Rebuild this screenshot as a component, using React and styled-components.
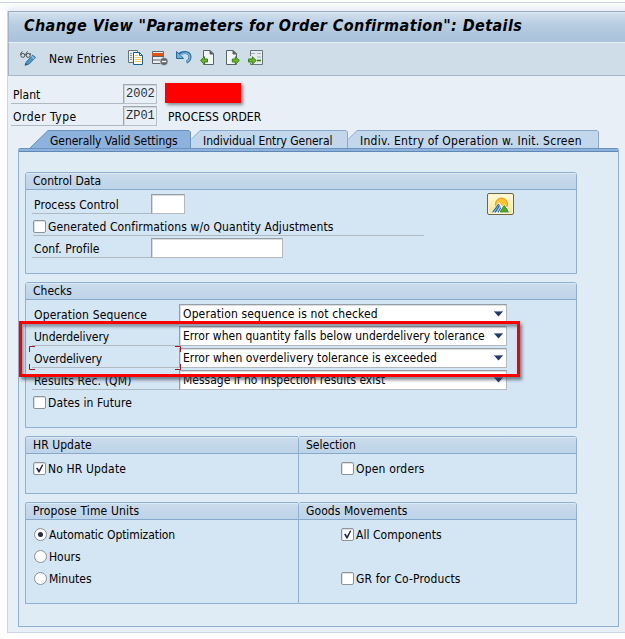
import React from 'react';
import styled, { createGlobalStyle, css } from 'styled-components';

const GlobalStyle = createGlobalStyle`
  * { box-sizing: border-box; }
  body {
    margin: 0;
    background: #fff;
    overflow: hidden;
    font: 12px/16px "DejaVu Sans Condensed", "DejaVu Sans", sans-serif;
    color: #000;
  }
`;

const Page = styled.div`
  width: 625px;
  height: 639px;
  padding-top: 2px;
`;

const TopStrip = styled.div`
  height: 9px;
  border-top: 1px solid #cbd5e2;
  background: linear-gradient(90deg, #fff, rgba(255, 255, 255, 0) 12px), linear-gradient(#fbfcfe, #e9eef6);
`;

const Window = styled.div`
  margin-left: 7px;
  height: 622px;
  border-left: 1px solid #ccd6e6;
  border-bottom: 1px solid #ccd6e6;
  background: #e8eff7;
`;

const TitleBar = styled.h1`
  margin: 0;
  height: 31px;
  padding: 3px 0 0 15px;
  border-top: 1px solid #97a9bd;
  border-left: 1px solid #a3b4c8;
  background: linear-gradient(#d2e0ee, #b6cce1 45%, #a9c2da);
  box-shadow: inset 0 1px #dfe9f2;
  font: italic bold 16px/22px "DejaVu Sans Condensed", "DejaVu Sans", sans-serif;
  letter-spacing: 0.4px;
  white-space: nowrap;
`;

const Toolbar = styled.div`
  display: flex;
  align-items: center;
  height: 34px;
  padding: 0 0 0 11px;
  border-top: 1px solid #e8f0f7;
  border-left: 1px solid #a3b4c8;
  border-bottom: 1px solid #a6b6c8;
  background: #cedde8;

  svg { display: block; flex: none; }
`;

const ToolIcons = styled.div`
  display: flex;
  gap: 8px;
  margin: -2px 0 0 12px;
`;

const Text = styled.span`
  white-space: nowrap;
  letter-spacing: ${({ $track = 0 }) => $track}px;
`;

const ToolText = styled(Text)`
  margin-left: 12px;
`;

const KeyFields = styled.div`
  padding: 8px 0 0 3px;
`;

const KeyRow = styled.div`
  display: flex;
  height: 22px;
`;

const KeyLabel = styled.div`
  width: 112px;
  height: 20px;
  padding: 3px 0 0 2px;
  border-bottom: 1px solid #b0b9c2;
`;

const KeyValue = styled.div`
  width: 34px;
  height: 20px;
  padding: 2px 0 0 2px;
  border: 1px solid #a0a7ae;
  border-right-color: #b9c0c6;
  border-bottom-color: #b9c0c6;
  box-shadow: inset 1px 1px #cfd6dc;
  background: #e8eff6;
  color: #26303c;
  font: 12px/15px "Liberation Mono", monospace;
`;

const Redacted = styled.div`
  width: 76px;
  height: 20px;
  margin: -1px 0 0 8px;
  background: #f00;
  box-shadow: 2px 2px 3px rgba(60, 70, 80, 0.6);
`;

const KeyDescription = styled(Text)`
  margin: 3px 0 0 11px;
`;

const Tabs = styled.div`
  display: flex;
  height: 18px;
  margin: 2px 0 0 22px;
`;

const TabBox = styled.div`
  position: relative;
  width: ${({ $width }) => $width}px;
  height: 18px;
  padding: 3px 0 0 ${({ $indent }) => $indent}px;
`;

const TabShape = styled.svg`
  position: absolute;
  inset: 0;
  overflow: visible;
`;

const TabLabel = styled(Text)`
  position: relative;
`;

const TabPage = styled.div`
  width: 601px;
  height: 479px;
  margin-left: 10px;
  padding: 24px 0 0 6px;
  border: 1px solid #8fb0d2;
  border-top: 0;
  border-radius: 2px 2px 0 0;
  background: linear-gradient(#6c93c0 0 1px, #8fb2dc 1px 3px, #6088b6 3px 4px, transparent 4px), #dfebf5;
`;

const Sections = styled.div`
  width: 552px;
  display: flex;
  flex-direction: column;
  gap: 8px;
`;

const SectionPair = styled.div`
  display: grid;
  grid-template-columns: 273px 279px;
`;

const Group = styled.section`
  position: relative;
  height: ${({ $height }) => $height}px;
  border: 1px solid #8fb0d0;
  ${({ $joined }) => $joined && css`border-right: 0;`}
  border-radius: 3px ${({ $joined }) => ($joined ? 0 : 3)}px 0 0;
  background: #d4e5f3;
`;

const GroupTitle = styled.h2`
  margin: 0;
  height: 17px;
  padding-left: 7px;
  border-bottom: 1px solid #86a9cc;
  border-radius: 2px 2px 0 0;
  background: linear-gradient(#cbdcec, #bdd3e8);
  box-shadow: inset 0 1px #dce8f3;
  font: inherit;
  line-height: 16px;
`;

const GroupBody = styled.div`
  padding: ${({ $top = 4 }) => $top}px 0 0 ${({ $left = 7 }) => $left}px;
`;

const FieldRow = styled.div`
  display: flex;
  height: 22px;
`;

const FieldLabel = styled.div`
  position: relative;
  width: ${({ $width }) => $width}px;
  height: 20px;
  padding: 3px 0 0 2px;
  margin-left: -1px;
  border-bottom: 1px solid #afb9c2;
`;

const Input = styled.div`
  width: ${({ $width }) => $width}px;
  height: 20px;
  border: 1px solid #979ea5;
  border-right-color: #b3b9bf;
  border-bottom-color: #b3b9bf;
  box-shadow: inset 1px 1px #dadde0;
  background: #fff;
`;

const Combo = styled(Input)`
  display: flex;
  justify-content: space-between;
  padding: 1px 3px 0 3px;

  svg { margin-top: 5px; }
`;

const CheckRow = styled.label`
  display: flex;
  width: ${({ $width }) => ($width ? `${$width}px` : 'auto')};
  height: ${({ $height = 22 }) => $height}px;
  border-bottom: ${({ $width }) => ($width ? '1px solid #afb9c2' : '0')};
  margin-bottom: ${({ $width }) => ($width ? 2 : 0)}px;
  padding-top: 4px;
`;

const CheckBox = styled.span`
  display: flex;
  width: 13px;
  height: 13px;
  margin-right: 2px;
  border: 1px solid #8d9398;
  border-radius: 2px;
  background: #fff;
  box-shadow: inset 1px 1px #dfe1e3;
`;

const CheckText = styled(Text)`
  margin-top: -1px;
`;

const Radio = styled.span`
  display: flex;
  align-items: center;
  justify-content: center;
  width: 13px;
  height: 13px;
  margin: 0 2px 0 1px;
  border: 1px solid #8a9096;
  border-radius: 50%;
  background: #fff;
`;

const RadioDot = styled.span`
  width: 5px;
  height: 5px;
  border-radius: 50%;
  background: #262c48;
`;

const OverviewButton = styled.button`
  position: absolute;
  left: 461px;
  top: 20px;
  width: 27px;
  height: 22px;
  padding: 0;
  border: 1px solid #6c6650;
  border-radius: 2px;
  background: linear-gradient(#fffbdc, #f9e48e);
  box-shadow: inset 0 0 0 1px #fff5c4;

  svg { display: block; margin: 1px 0 0 3px; }
`;

const Highlight = styled.div`
  position: absolute;
  left: -7px;
  top: 38px;
  width: 501px;
  height: 56px;
  border: 3px solid #f80000;
  box-shadow: 2px 3px 3px rgba(50, 60, 75, 0.6), inset 2px 3px 3px rgba(50, 60, 75, 0.45);
  pointer-events: none;
`;

const FocusCorners = styled.svg`
  position: absolute;
  left: -3px;
  top: -2px;
`;

const TickMark = () => (
  <svg width="11" height="11" viewBox="0 0 11 11">
    <path d="M2 5 3.8 4.8 5 7 8 1.6 9.4 1.8 5.6 9.4 4.4 9.4Z" fill="#262b48" />
  </svg>
);

const Check = ({ checked, text, track, width, height }) => (
  <CheckRow $width={width} $height={height}>
    <CheckBox>{checked && <TickMark />}</CheckBox>
    <CheckText $track={track}>{text}</CheckText>
  </CheckRow>
);

const RadioOption = ({ checked, text, track }) => (
  <CheckRow>
    <Radio>{checked && <RadioDot />}</Radio>
    <CheckText $track={track}>{text}</CheckText>
  </CheckRow>
);

const Tab = ({ width, indent, slope, start, active, text, track }) => {
  const edge = `L${start + slope} .5 H${width - 2} L${width - 0.5} 2 V18`;
  return (
    <TabBox $width={width} $indent={indent}>
      <TabShape width={width} height="18">
        <path
          d={active ? `M${start} 18 ${edge}Z` : `M0 18 V10 ${edge}Z`}
          fill={active ? '#8eb2de' : '#c2d7eb'}
        />
        <path
          d={`M${start} ${active ? 18 : 9.5} ${edge}`}
          fill="none"
          stroke={active ? '#6b92bd' : '#8aa9c9'}
        />
      </TabShape>
      <TabLabel $track={track}>{text}</TabLabel>
    </TabBox>
  );
};

const ComboField = ({ label, labelTrack, value, track, focused }) => (
  <FieldRow>
    <FieldLabel $width={147}>
      <Text $track={labelTrack}>{label}</Text>
      {focused && (
        <FocusCorners width="153" height="24" fill="none" stroke="#a8141c">
          <path d="M.5 6V.5H6 M146 .5H151.5V6 M.5 18V23.5H6 M146 23.5H151.5V18" />
        </FocusCorners>
      )}
    </FieldLabel>
    <Combo $width={328}>
      <Text $track={track}>{value}</Text>
      <svg width="9" height="6" viewBox="0 0 9 6">
        <path d="M0 .5H9L4.5 5.5Z" fill="#23386a" />
        <path d="M0 .5H9" stroke="#7788a8" />
      </svg>
    </Combo>
  </FieldRow>
);

const DisplayChangeIcon = () => (
  <svg width="17" height="16" viewBox="0 0 17 16" fill="none">
    <g stroke="#4b4f52">
      <circle cx="2.8" cy="4.4" r="2" />
      <circle cx="8.2" cy="4.4" r="2" />
      <path d="M.8 4V2L2.5 .5 M6.2 4V2L7.8 .5 M4.8 4H6.2 M10.2 4V2" />
    </g>
    <path d="M5 14.3 6.3 10.9 12.6 4 15.6 6.5 9 13.1Z" fill="#4b94c4" stroke="#286a98" strokeWidth=".8" />
    <path d="M11.5 5.2 14.4 7.8" stroke="#d7e8f2" />
    <path d="M5 14.3 5.8 12.1 7.4 13.5Z" fill="#344653" />
  </svg>
);

const CopyIcon = () => (
  <svg width="16" height="16" viewBox="0 0 16 16" fill="none">
    <path d="M.5 12.5V.5H9.5V12.5Z" fill="#e6edf2" stroke="#68747c" />
    <path d="M2 3.5H4 M2 5.5H4 M2 7.5H4 M2 9.5H4" stroke="#89949b" />
    <path d="M5.5 2.5H11.5L14.5 5.5V14.5H5.5Z" fill="#fff" stroke="#16638f" />
    <path d="M11.5 2.5V5.5H14.5" stroke="#16638f" />
    <path d="M7 5.5H10 M7 7.5H13 M7 9.5H13 M7 11.5H13" stroke="#f3cb5a" />
  </svg>
);

const DeleteRowIcon = () => (
  <svg width="16" height="16" viewBox="0 0 16 16" fill="none">
    <path d="M.5 1.5H11.5V13.5H.5Z" fill="#e9eff4" stroke="#5e6468" />
    <path d="M0 3H12V6H0Z" fill="#db5316" />
    <path d="M0 6.5H12 M0 10H12" stroke="#5e6468" />
    <circle cx="12" cy="11.5" r="4" fill="#5d5f62" stroke="#e2eaf0" strokeWidth=".6" />
    <path d="M9.8 11.5H14.2" stroke="#fff" strokeWidth="1.6" />
  </svg>
);

const UndoIcon = () => (
  <svg width="16" height="16" viewBox="0 0 16 16" fill="none">
    <path d="M2.5 5.2C6 1.2 13.5 1.5 14 6.5 14.2 9.5 12 11.5 10.5 12" stroke="#246b9d" strokeWidth="3" />
    <path d="M.5 1.5V8.5H7.5L5.7 6.5 3 3.8Z" fill="#6fadd5" stroke="#246b9d" />
    <path d="M3.5 5.5C7 2 12.5 2.3 13.8 6 14.2 9 12.5 10.7 10.8 11.8" stroke="#74b1d7" strokeWidth="1.4" />
  </svg>
);

const PageIcon = ({ shift = 0 }) => (
  <>
    <path d={`M${2.5 + shift} .5H${9 + shift}L${12.5 + shift} 4V14.5H${2.5 + shift}Z`} fill="#f1f5f8" stroke="#5c6266" />
    <path d={`M${9 + shift} .5V4H${12.5 + shift}Z`} fill="#5c6266" stroke="#5c6266" />
  </>
);

const PreviousPageIcon = () => (
  <svg width="16" height="16" viewBox="0 0 16 16">
    <PageIcon shift={1} />
    <path d="M.5 10.5 4.5 6.7V9H7.5V12H4.5V14.4Z" fill="#6cb42c" stroke="#39821a" />
  </svg>
);

const NextPageIcon = () => (
  <svg width="16" height="16" viewBox="0 0 16 16">
    <PageIcon />
    <path d="M15.3 10.5 11.3 6.7V9H8.3V12H11.3V14.4Z" fill="#6cb42c" stroke="#39821a" />
  </svg>
);

const OtherEntryIcon = () => (
  <svg width="16" height="16" viewBox="0 0 16 16" fill="none">
    <path d="M2.5 6V.5H14.5V14.5H2.5V13" fill="#e6edf2" stroke="#6b7378" />
    <path d="M3 3.5H7 M9 3.5H13 M9 7H13" stroke="#a6afb6" />
    <path d="M9 10.5H13" stroke="#39821a" strokeWidth="1.6" />
    <path d="M8.2 10.5 4.3 6.7V9H.5V12H4.3V14.4Z" fill="#6cb42c" stroke="#39821a" />
  </svg>
);

const OverviewIcon = () => (
  <svg width="19" height="18" viewBox="0 0 19 18">
    <circle cx="10.5" cy="8" r="6" fill="#ffc32b" stroke="#ef9a19" />
    <path d="M1 16.5 8 6.5 12 13 9 16.5Z" fill="#a4cce8" stroke="#fff" />
    <path d="M1.5 16.5 7.7 8 M4 16.5 8.5 9.5 M7 16.5 10 12" stroke="#256493" strokeWidth="1.2" fill="none" />
    <path d="M8 16.5 13.2 8.5 17.5 14V16.5Z" fill="#62b32c" stroke="#fff" />
    <path d="M9 16H17.5L13.2 9.5Z" fill="#58a828" stroke="#398322" strokeWidth=".8" />
  </svg>
);

export default function App() {
  return (
    <Page>
      <GlobalStyle />
      <TopStrip />
      <Window>
        <TitleBar>Change View "Parameters for Order Confirmation": Details</TitleBar>
        <Toolbar>
          <DisplayChangeIcon />
          <ToolText $track={0.2}>New Entries</ToolText>
          <ToolIcons>
            <CopyIcon />
            <DeleteRowIcon />
            <UndoIcon />
            <PreviousPageIcon />
            <NextPageIcon />
            <OtherEntryIcon />
          </ToolIcons>
        </Toolbar>

        <KeyFields>
          <KeyRow>
            <KeyLabel><Text>Plant</Text></KeyLabel>
            <KeyValue>2002</KeyValue>
            <Redacted />
          </KeyRow>
          <KeyRow>
            <KeyLabel><Text $track={0.5}>Order Type</Text></KeyLabel>
            <KeyValue>ZP01</KeyValue>
            <KeyDescription $track={0.05}>PROCESS ORDER</KeyDescription>
          </KeyRow>
        </KeyFields>

        <Tabs>
          <Tab active width={161} indent={20} start={0} slope={18} text="Generally Valid Settings" track={-0.06} />
          <Tab width={157} indent={12} start={0} slope={9} text="Individual Entry General" track={-0.05} />
          <Tab width={251} indent={12} start={0} slope={9} text="Indiv. Entry of Operation w. Init. Screen" track={0.26} />
        </Tabs>

        <TabPage>
          <Sections>
            <Group $height={102}>
              <GroupTitle><Text>Control Data</Text></GroupTitle>
              <GroupBody>
                <FieldRow>
                  <FieldLabel $width={119}><Text $track={0.1}>Process Control</Text></FieldLabel>
                  <Input $width={34} />
                </FieldRow>
                <Check width={391} height={20} text="Generated Confirmations w/o Quantity Adjustments" track={0.12} />
                <FieldRow>
                  <FieldLabel $width={119}><Text $track={0.1}>Conf. Profile</Text></FieldLabel>
                  <Input $width={132} />
                </FieldRow>
              </GroupBody>
              <OverviewButton aria-label="Overview"><OverviewIcon /></OverviewButton>
            </Group>

            <Group $height={146}>
              <GroupTitle><Text>Checks</Text></GroupTitle>
              <GroupBody>
                <ComboField label="Operation Sequence" labelTrack={0.15} value="Operation sequence is not checked" track={0.13} />
                <ComboField label="Underdelivery" labelTrack={-0.05} value="Error when quantity falls below underdelivery tolerance" track={0.02} />
                <ComboField focused label="Overdelivery" labelTrack={-0.08} value="Error when overdelivery tolerance is exceeded" track={0.05} />
                <ComboField label="Results Rec. (QM)" labelTrack={0.15} value="Message if no inspection results exist" />
                <Check text="Dates in Future" track={0.1} />
              </GroupBody>
              <Highlight />
            </Group>

            <SectionPair>
              <Group $joined $height={58}>
                <GroupTitle><Text $track={0.05}>HR Update</Text></GroupTitle>
                <GroupBody>
                  <Check checked text="No HR Update" track={0.15} />
                </GroupBody>
              </Group>
              <Group $height={58}>
                <GroupTitle><Text>Selection</Text></GroupTitle>
                <GroupBody $left={42}>
                  <Check text="Open orders" track={0.18} />
                </GroupBody>
              </Group>
            </SectionPair>

            <SectionPair>
              <Group $joined $height={102}>
                <GroupTitle><Text $track={0.15}>Propose Time Units</Text></GroupTitle>
                <GroupBody>
                  <RadioOption checked text="Automatic Optimization" track={-0.08} />
                  <RadioOption text="Hours" />
                  <RadioOption text="Minutes" />
                </GroupBody>
              </Group>
              <Group $height={102}>
                <GroupTitle><Text $track={0.08}>Goods Movements</Text></GroupTitle>
                <GroupBody $left={42}>
                  <Check checked height={44} text="All Components" track={0.04} />
                  <Check text="GR for Co-Products" track={0.12} />
                </GroupBody>
              </Group>
            </SectionPair>
          </Sections>
        </TabPage>
      </Window>
    </Page>
  );
}
